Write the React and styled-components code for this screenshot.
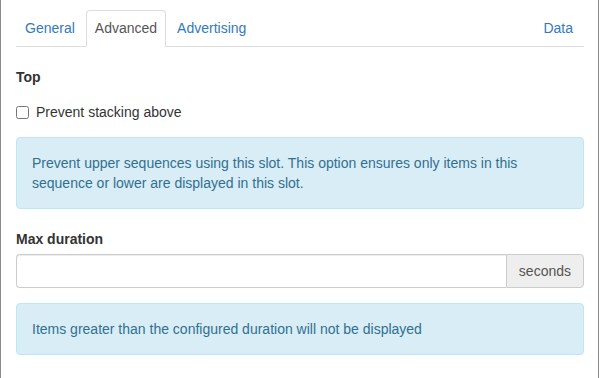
import React from "react";
import styled, { createGlobalStyle } from "styled-components";

const GlobalStyle = createGlobalStyle`
  html, body {
    margin: 0;
    padding: 0;
    background: #fff;
  }
  body {
    font-family: "Liberation Sans", Arial, Helvetica, sans-serif;
    font-size: 14px;
    line-height: 20px;
    color: #333;
  }
`;

const tabs = ["General", "Advanced", "Advertising"];

const App = () => {
  return (
    <>
      <GlobalStyle />
      <Frame>
        <Panel>
          <TabBar>
            {tabs.map((t) => (
              <Tab key={t} active={t === "Advanced"}>
                {t}
              </Tab>
            ))}
            <Spacer />
            <Tab>Data</Tab>
          </TabBar>

          <SectionTitle>Top</SectionTitle>
          <CheckRow>
            <Checkbox type="checkbox" />
            Prevent stacking above
          </CheckRow>
          <Alert>
            Prevent upper sequences using this slot. This option ensures only items in this
            sequence or lower are displayed in this slot.
          </Alert>

          <FieldLabel>Max duration</FieldLabel>
          <InputGroup>
            <TextInput type="text" />
            <Addon>seconds</Addon>
          </InputGroup>
          <Alert>Items greater than the configured duration will not be displayed</Alert>
        </Panel>
      </Frame>
    </>
  );
};

const Frame = styled.div`
  width: 597px;
  height: 378px;
  border-left: 1px solid #8a8a8a;
  border-right: 1px solid #8a8a8a;
  background: #fff;
  overflow: hidden;
`;

const Panel = styled.div`
  padding: 10px 14px 0 15px;
  display: flex;
  flex-direction: column;
`;

const TabBar = styled.div`
  display: flex;
  border-bottom: 1px solid #ddd;
  height: 36px;
`;

const Tab = styled.div`
  padding: 7px 8px;
  margin-right: 2px;
  margin-bottom: -1px;
  border: 1px solid ${({ active }) => (active ? "#ddd" : "transparent")};
  border-bottom-color: ${({ active }) => (active ? "#fff" : "transparent")};
  border-radius: 4px 4px 0 0;
  background: ${({ active }) => (active ? "#fff" : "transparent")};
  color: ${({ active }) => (active ? "#555" : "#337ab7")};
  cursor: pointer;
  &:last-child {
    margin-right: 0;
    padding-right: 10px;
  }
`;

const Spacer = styled.div`
  flex: 1;
`;

const SectionTitle = styled.div`
  font-weight: bold;
  margin-top: 20px;
`;

const CheckRow = styled.label`
  display: flex;
  align-items: center;
  margin-top: 15px;
`;

const Checkbox = styled.input`
  width: 13px;
  height: 13px;
  margin: 0 7px 0 0;
`;

const Alert = styled.div`
  margin-top: 15px;
  padding: 15px;
  background: #d9edf7;
  border: 1px solid #bce8f1;
  border-radius: 4px;
  color: #31708f;
`;

const FieldLabel = styled.div`
  font-weight: bold;
  margin-top: 20px;
  margin-bottom: 5px;
`;

const InputGroup = styled.div`
  display: flex;
  height: 34px;
`;

const TextInput = styled.input`
  flex: 1;
  min-width: 0;
  box-sizing: border-box;
  height: 34px;
  padding: 6px 12px;
  border: 1px solid #ccc;
  border-right: 0;
  border-radius: 4px 0 0 4px;
  font: inherit;
  box-shadow: inset 0 1px 1px rgba(0, 0, 0, 0.075);
  outline: none;
`;

const Addon = styled.div`
  display: flex;
  align-items: center;
  padding: 0 12px;
  background: #eee;
  border: 1px solid #ccc;
  border-radius: 0 4px 4px 0;
  color: #555;
`;

export default App;
